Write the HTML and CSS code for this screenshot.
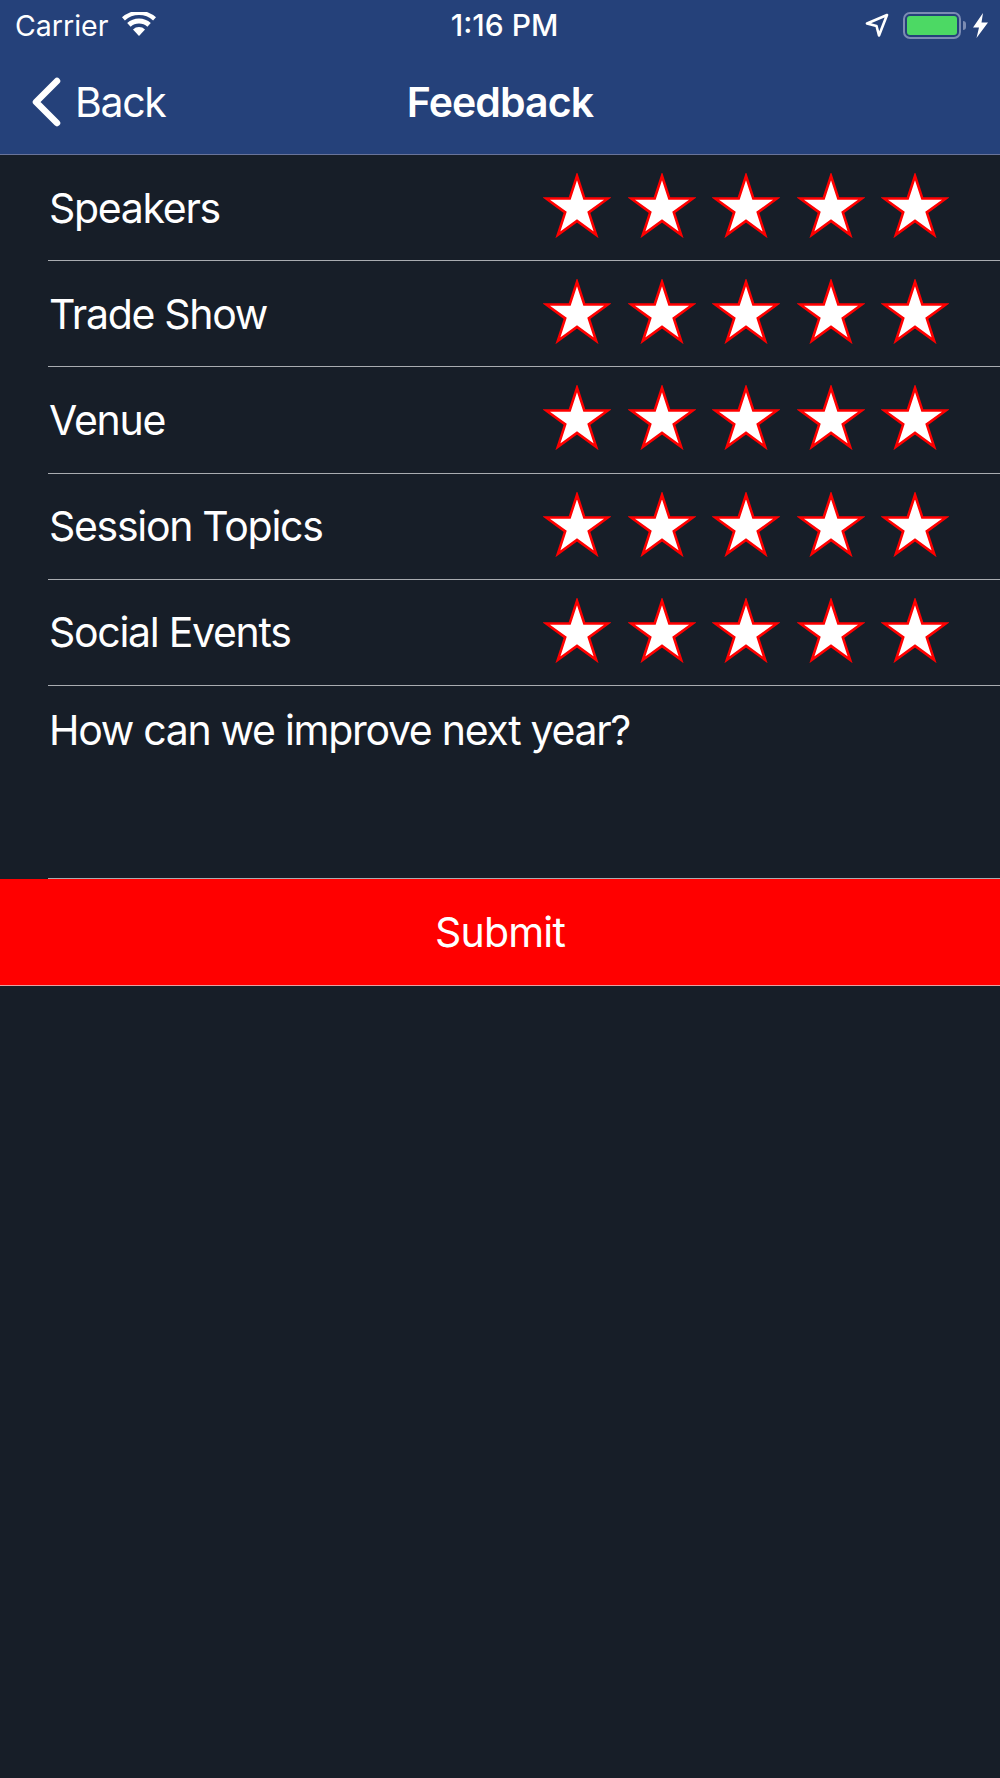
FILE: index.html
```html
<!DOCTYPE html>
<html lang="en">
<head>
  <meta charset="UTF-8">
  <meta name="viewport" content="width=device-width, initial-scale=1.0">
  <title>Feedback</title>
  <link rel="stylesheet" href="styles.css">
</head>
<body>
  <svg class="defs" width="0" height="0">
    <symbol id="star" viewBox="0 0 68 65">
      <polygon points="34,3 41.3,25.46 64.91,25.46 45.8,39.34 53.1,61.79 34,47.91 14.9,61.79 22.2,39.34 3.09,25.46 26.7,25.46"/>
    </symbol>
  </svg>

  <header class="top">
    <div class="status">
      <div class="status-left">
        <span>Carrier</span>
        <svg class="wifi" viewBox="0 0 34 24">
          <path d="M17 24l-6-6.6a8.6 8.6 0 0 1 12 0z"/>
          <path d="M8.6 14.8L5.2 11a17.4 17.4 0 0 1 23.6 0l-3.4 3.8a12.3 12.3 0 0 0-16.8 0z"/>
          <path d="M2.9 8.4L0 5.2a25.6 25.6 0 0 1 34 0l-2.9 3.2a21.2 21.2 0 0 0-28.2 0z"/>
        </svg>
      </div>
      <div class="time">1:16 PM</div>
      <div class="status-right">
        <svg class="arrow" viewBox="0 0 24 24">
          <path d="M22 2L2 10.5l9.5 2.5 2.5 9.5z" fill="none" stroke="#fff" stroke-width="2.6" stroke-linejoin="round"/>
        </svg>
        <div class="battery"><div class="battery-fill"></div></div>
        <div class="battery-nub"></div>
        <svg class="bolt" viewBox="0 0 15 25">
          <path d="M10 0L0 14.5h6L3.5 25 15 9.5H8.5z"/>
        </svg>
      </div>
    </div>
    <nav class="nav">
      <a class="back">
        <svg class="chevron" viewBox="0 0 30 50">
          <path d="M26 4L5 25l21 21" fill="none" stroke="#fff" stroke-width="6.5" stroke-linecap="round" stroke-linejoin="round"/>
        </svg>
        <span>Back</span>
      </a>
      <div class="title">Feedback</div>
      <div></div>
    </nav>
  </header>

  <main>
    <div class="row">
      <span>Speakers</span>
      <div class="stars">
        <svg class="star"><use href="#star"/></svg>
        <svg class="star"><use href="#star"/></svg>
        <svg class="star"><use href="#star"/></svg>
        <svg class="star"><use href="#star"/></svg>
        <svg class="star"><use href="#star"/></svg>
      </div>
    </div>
    <div class="row">
      <span>Trade Show</span>
      <div class="stars">
        <svg class="star"><use href="#star"/></svg>
        <svg class="star"><use href="#star"/></svg>
        <svg class="star"><use href="#star"/></svg>
        <svg class="star"><use href="#star"/></svg>
        <svg class="star"><use href="#star"/></svg>
      </div>
    </div>
    <div class="row">
      <span>Venue</span>
      <div class="stars">
        <svg class="star"><use href="#star"/></svg>
        <svg class="star"><use href="#star"/></svg>
        <svg class="star"><use href="#star"/></svg>
        <svg class="star"><use href="#star"/></svg>
        <svg class="star"><use href="#star"/></svg>
      </div>
    </div>
    <div class="row">
      <span>Session Topics</span>
      <div class="stars">
        <svg class="star"><use href="#star"/></svg>
        <svg class="star"><use href="#star"/></svg>
        <svg class="star"><use href="#star"/></svg>
        <svg class="star"><use href="#star"/></svg>
        <svg class="star"><use href="#star"/></svg>
      </div>
    </div>
    <div class="row">
      <span>Social Events</span>
      <div class="stars">
        <svg class="star"><use href="#star"/></svg>
        <svg class="star"><use href="#star"/></svg>
        <svg class="star"><use href="#star"/></svg>
        <svg class="star"><use href="#star"/></svg>
        <svg class="star"><use href="#star"/></svg>
      </div>
    </div>
    <div class="comment">How can we improve next year?</div>
    <div class="submit">Submit</div>
  </main>
</body>
</html>
```

FILE: styles.css
```css
:root {
  --bg: #171e28;
  --bar: #25417a;
  --line: #a9acb1;
  --text: #fff;
}
* {
  box-sizing: border-box;
}
body {
  margin: 0;
  height: 1778px;
  background: var(--bg);
  color: var(--text);
  font-family: Inter, 'Noto Sans', sans-serif;
  font-size: 41px;
  font-weight: 380;
  letter-spacing: -1.3px;
  overflow: hidden;
}
.defs {
  display: block;
}
.top {
  height: 155px;
  background: var(--bar);
  border-bottom: 1px solid #69749a;
}
.status {
  display: grid;
  grid-template-columns: 1fr auto 1fr;
  align-items: center;
  height: 50px;
  padding: 0 12px 0 15px;
  font-size: 28.5px;
  letter-spacing: 0;
}
.status-left {
  display: flex;
  align-items: center;
  gap: 14px;
}
.wifi {
  width: 34px;
  height: 24px;
  fill: #fff;
  margin-top: -3px;
}
.time {
  margin-left: 6px;
  font-weight: 500;
  font-size: 30px;
}
.status-right {
  display: flex;
  align-items: center;
  justify-content: flex-end;
}
.arrow {
  width: 24px;
  height: 24px;
  margin-right: 14px;
}
.battery {
  width: 58px;
  height: 27px;
  padding: 2px;
  border: 2px solid #7c8cb3;
  border-radius: 7px;
}
.battery-fill {
  height: 100%;
  background: #4cd964;
  border-radius: 3px;
}
.battery-nub {
  width: 3px;
  height: 9px;
  margin: 0 7px 0 2px;
  background: #7c8cb3;
  border-radius: 0 3px 3px 0;
}
.bolt {
  width: 15px;
  height: 25px;
  fill: #fff;
}
.nav {
  display: grid;
  grid-template-columns: 1fr auto 1fr;
  align-items: center;
  height: 104px;
  padding: 0 31px;
}
.back {
  display: flex;
  align-items: center;
  gap: 14px;
}
.chevron {
  width: 30px;
  height: 50px;
}
.title {
  font-weight: 600;
  letter-spacing: -0.9px;
}
.row {
  display: flex;
  align-items: center;
  justify-content: space-between;
  height: 106.2px;
  margin-left: 48px;
  padding: 0 51px 0 1px;
  border-bottom: 1px solid var(--line);
}
.stars {
  display: flex;
  gap: 16.5px;
  margin-top: -4px;
}
.star {
  display: block;
  width: 68px;
  height: 65px;
  fill: #fff;
  stroke: #f00;
  stroke-width: 2.6;
  stroke-miterlimit: 10;
}
.comment {
  height: 193px;
  margin-left: 48px;
  padding: 19px 0 0 1px;
  border-bottom: 1px solid var(--line);
}
.submit {
  display: flex;
  align-items: center;
  justify-content: center;
  height: 107px;
  background: #f00;
  border-bottom: 1px solid #e8a0a0;
  letter-spacing: -0.8px;
}
```
